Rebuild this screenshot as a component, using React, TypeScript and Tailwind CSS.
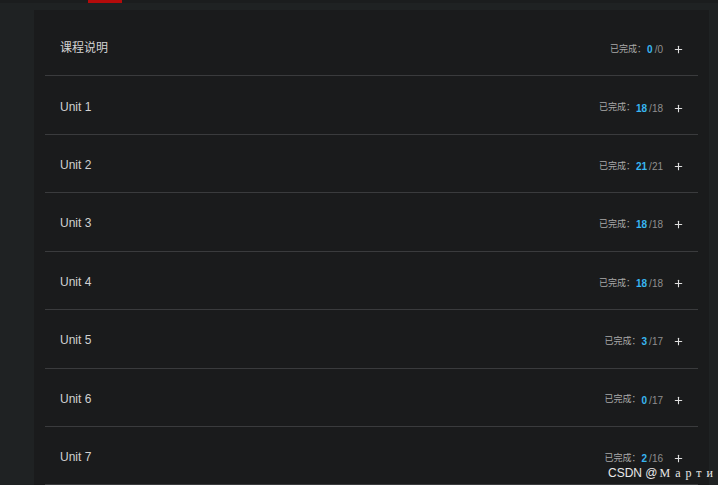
import { Plus } from 'lucide-react'

const units = [
  { title: '课程说明', done: 0, total: 0 },
  { title: 'Unit 1', done: 18, total: 18 },
  { title: 'Unit 2', done: 21, total: 21 },
  { title: 'Unit 3', done: 18, total: 18 },
  { title: 'Unit 4', done: 18, total: 18 },
  { title: 'Unit 5', done: 3, total: 17 },
  { title: 'Unit 6', done: 0, total: 17 },
  { title: 'Unit 7', done: 2, total: 16 },
]

function UnitRow({ title, done, total }: { title: string; done: number; total: number }) {
  return (
    <div className="flex h-[58.43px] items-center justify-between border-b border-[#3a3b3d] pl-[15px] pr-[14px]">
      <span className="pt-[3px] text-[12px] text-[#d2d2d2]">{title}</span>
      <div className="flex items-center pt-[6px]">
        <span className="text-[9px] text-[#a9a9a9]">已完成：</span>
        <span className="ml-px text-[10px] font-bold text-[#38b6f2]">{done}</span>
        <span className="ml-[2px] text-[10px] text-[#8f8f8f]">/{total}</span>
        <Plus className="ml-[10px] h-[11px] w-[11px] text-[#e0e0e0]" strokeWidth={2.4} />
      </div>
    </div>
  )
}

export default function App() {
  return (
    <div
      className="relative h-[485px] w-[718px] overflow-hidden bg-[#1f2223]"
      style={{ fontFamily: '"Liberation Sans", Arial, "Noto Sans CJK SC", sans-serif' }}
    >
      <div className="flex h-[3px] bg-[#1b1d1e]">
        <div className="ml-[88px] w-[34px] bg-[#b40b0b]" />
      </div>
      <div className="ml-[34px] mt-[7px] h-[480px] w-[675px] bg-[#1a1b1c] pl-[11px] pr-[11px] pt-[8px]">
        {units.map((u) => (
          <UnitRow key={u.title} {...u} />
        ))}
      </div>
      <div className="absolute left-[608px] top-[464px] flex items-baseline whitespace-nowrap text-[12px] text-[#e8e8e8]">
        <span>CSDN @</span>
        <span className="ml-[2px] tracking-[5px]" style={{ fontFamily: '"Liberation Serif", serif' }}>
          Марти
        </span>
      </div>
    </div>
  )
}
